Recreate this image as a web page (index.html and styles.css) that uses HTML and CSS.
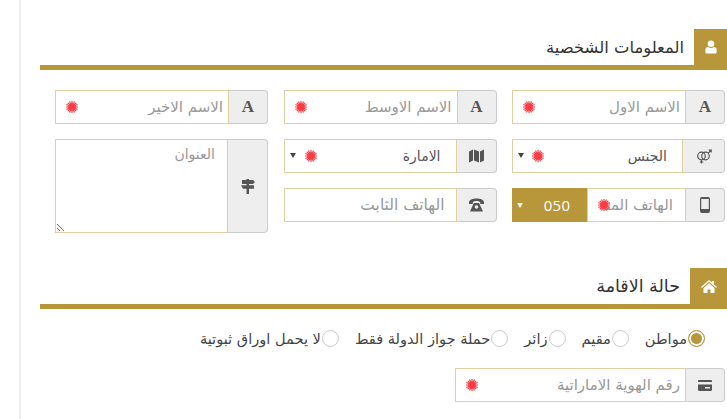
FILE: index.html
```html
<!DOCTYPE html>
<html lang="ar" dir="rtl">
<head>
<meta charset="utf-8">
<title>المعلومات الشخصية</title>
<link rel="stylesheet" href="styles.css">
</head>
<body>
<svg class="defs" width="0" height="0" aria-hidden="true"><defs>
<g id="star"><path d="M6 0v12M0 6h12M1.800 1.800l8.400 8.400M10.200 1.800l-8.400 8.400M3.500.4l5 11.200M8.500.4l-5 11.200M.4 3.500l11.200 5M11.600 3.500L.4 8.500" stroke="#fb3c45" stroke-width="1.200" fill="none"/><circle cx="6" cy="6" r="3.800" fill="#fb3c45"/></g>
</defs></svg>
<main class="page">
  <section class="section">
    <header class="head">
      <span class="head-icon"><svg width="14" height="14" viewBox="0 0 14 14"><circle cx="7" cy="3.800" r="3.300" fill="#fff"/><path d="M1.400 12.300V9.800C1.400 8 2.600 7 4 7c.8.600 1.800 1 3 1s2.200-.4 3-1c1.400 0 2.600 1 2.600 2.800v2.500c0 .8-.6 1.300-1.300 1.300H2.700c-.7 0-1.300-.5-1.300-1.300z" fill="#fff"/></svg></span>
      <h2 class="title">المعلومات الشخصية</h2>
    </header>
    <div class="grid">
      <div class="field"><span class="addon"><b class="letter">A</b></span><span class="box"><input class="input" placeholder="الاسم الاول"><svg class="star" width="12" height="12" viewBox="0 0 12 12"><use href="#star"/></svg></span></div>
      <div class="field"><span class="addon"><b class="letter">A</b></span><span class="box"><input class="input" placeholder="الاسم الاوسط"><svg class="star" width="12" height="12" viewBox="0 0 12 12"><use href="#star"/></svg></span></div>
      <div class="field"><span class="addon"><b class="letter">A</b></span><span class="box"><input class="input" placeholder="الاسم الاخير"><svg class="star" width="12" height="12" viewBox="0 0 12 12"><use href="#star"/></svg></span></div>

      <div class="field"><span class="addon addon-wide"><svg width="16" height="16" viewBox="0 0 16 16" fill="none" stroke="#555" stroke-width="1.200"><circle cx="5.500" cy="8" r="3.800"/><circle cx="9.500" cy="8" r="3.800"/><path d="M5.500 12v3.500M3.800 14h3.400M12.200 5.200L15 2.400M12.800 2.200h2.400v2.400"/></svg></span><span class="box"><span class="select">الجنس</span><svg class="star star-sel" width="12" height="12" viewBox="0 0 12 12"><use href="#star"/></svg><i class="caret"></i></span></div>
      <div class="field"><span class="addon addon-mid"><svg width="15" height="14" viewBox="0 0 15 14" fill="#555"><path d="M0 2.500L4 .5V11.500L0 13.500zM5 .5L10 2.500V13.500L5 11.500zM11 2.500L15 .5V11.500L11 13.500z"/></svg></span><span class="box"><span class="select">الامارة</span><svg class="star star-em" width="12" height="12" viewBox="0 0 12 12"><use href="#star"/></svg><i class="caret"></i></span></div>
      <div class="field tall"><span class="addon addon-tall"><svg width="14" height="15" viewBox="0 0 14 15" fill="#555"><path d="M5.500 0h2.500v15H5.500z"/><path d="M1 1h11l2 2-2 2H1zM0 6.200h13v3.600H2z"/></svg></span><span class="box"><textarea class="area" placeholder="العنوان"></textarea></span></div>

      <div class="field"><span class="addon addon-phone"><svg width="10" height="16" viewBox="0 0 10 16"><rect width="10" height="16" rx="2" fill="#555"/><rect x="1.200" y="2" width="7.600" height="10" fill="#eee"/></svg></span><span class="box box-mob"><input class="input input-mob" placeholder="الهاتف المتحرك"><svg class="star star-mob" width="12" height="12" viewBox="0 0 12 12"><use href="#star"/></svg></span><span class="code">050<i class="caret caret-w"></i></span></div>
      <div class="field"><span class="addon addon-mid"><svg width="15" height="14" viewBox="0 0 15 14" fill="#555"><path d="M0 4.500C0 1.800 3.500.5 7.500.5S15 1.800 15 4.500V6h-3.800V4.200C10.500 3.400 9 3 7.500 3s-3 .4-3.700 1.200V6H0z"/><path d="M4.800 5H10l4 8.500H1z"/><circle cx="7.500" cy="9" r="1.800" fill="#eee"/></svg></span><span class="box"><input class="input input-land" placeholder="الهاتف الثابت"></span></div>
    </div>
  </section>

  <section class="section section-two">
    <header class="head">
      <span class="head-icon head-icon-home"><svg width="16" height="13" viewBox="0 0 16 13" fill="#fff"><path d="M8 0l2.800 2.500V1h2v3.300L16 7.100l-.8.800L8 1.700.8 7.900 0 7.100z"/><path d="M2.500 8L8 3.200 13.500 8v5H9.500V9.500h-3V13h-4z"/></svg></span>
      <h2 class="title title-two">حالة الاقامة</h2>
    </header>
    <div class="radios">
      <label class="radio"><i class="dot dot-on"></i>مواطن</label>
      <label class="radio"><i class="dot"></i>مقيم</label>
      <label class="radio"><i class="dot"></i>زائر</label>
      <label class="radio"><i class="dot"></i>حملة جواز الدولة فقط</label>
      <label class="radio"><i class="dot"></i>لا يحمل اوراق ثبوتية</label>
    </div>
    <div class="field field-id"><span class="addon addon-id"><svg width="14" height="11" viewBox="0 0 14 11" fill="#555"><path d="M1.200 0h11.600c.7 0 1.200.5 1.200 1.200V2H0v-.8C0 .5.500 0 1.200 0zM0 4.500h14v5.300c0 .7-.5 1.200-1.200 1.200H1.200C.5 11 0 10.500 0 9.800zM7 7v1.500h5V7z"/></svg></span><span class="box"><input class="input" placeholder="رقم الهوية الاماراتية"><svg class="star" width="12" height="12" viewBox="0 0 12 12"><use href="#star"/></svg></span></div>
  </section>
</main>
</body>
</html>
```
FILE: styles.css
```css
* { box-sizing: border-box; }
html, body { margin: 0; padding: 0; background: #fff; }
body { width: 727px; height: 419px; overflow: hidden; font-family: "DejaVu Sans", sans-serif; font-size: 14px; color: #555; }
.defs { position: absolute; }
.page { margin-left: 19px; border-left: 2px solid #eee; height: 419px; padding: 29px 0 0 19px; }
.head { display: flex; align-items: stretch; height: 41px; border-bottom: 5px solid #b8973a; }
.head-icon { width: 33px; display: flex; align-items: center; justify-content: center; background: #b8973a; }
.head-icon-home { width: 37px; }
.title { margin: 0 10px 0 0; font-size: 16.400px; font-weight: 400; line-height: 38px; color: #333; }
.title-two { font-size: 17.500px; line-height: 36px; }
.grid { display: grid; grid-template-columns: repeat(3, 213px); grid-template-rows: 34px 34px 34px; gap: 15px 15.500px; padding: 20px 2px 0 15px; }
.field.tall { grid-column: 3; grid-row: 2 / span 2; height: 94px; }
.field { display: flex; height: 34px; }
.addon { flex: 0 0 39px; display: flex; align-items: center; justify-content: center; background: #eee; border: 1px solid #ccc; border-left: 0; border-radius: 0 4px 4px 0; }
.addon-wide { flex-basis: 42px; }
.addon-mid { flex-basis: 40px; }
.addon-tall { flex-basis: 40px; }
.letter { font-family: "Liberation Serif", serif; font-size: 17px; font-weight: 700; color: #555; }
.box { position: relative; flex: 1; min-width: 0; display: flex; align-items: center; background: #fff; border: 1px solid #e0d09f; }
.input { width: 100%; height: 100%; padding: 0 5px 0 12px; border: 0; outline: 0; background: transparent; font: inherit; font-size: 15px; color: #555; }
.input::placeholder, .area::placeholder { color: #999; opacity: 1; }
.input-land { padding-right: 11px; font-size: 15.500px; }
.input-mob { padding-right: 12px; overflow: hidden; }
.area { width: 100%; height: 100%; padding: 6px 12px; border: 0; outline: 0; font: inherit; font-size: 14px; }
.star { position: absolute; left: 10px; top: 10px; }
.select { flex: 1; padding-right: 15px; font-size: 14px; color: #555; }
.star-sel { left: 19px; }
.star-em { left: 20px; }
.star-mob { left: 10px; }
.caret { position: absolute; left: 5px; top: 13px; width: 0; height: 0; border-style: solid; border-width: 5px 3px 0; border-color: #444 transparent transparent; }
.code { position: relative; flex: 0 0 75px; display: flex; align-items: center; justify-content: center; padding-left: 15px; background: #b8973a; color: #fff; font-family: "Open Sans", sans-serif; font-size: 15px; letter-spacing: .3px; }
.caret-w { border-top-color: #fff; top: 15px; }
.section-two { margin-top: 46px; }
.radios { display: flex; gap: 16px; padding: 20px 22px 0 0; height: 48px; }
.radio { display: flex; align-items: center; gap: 1px; height: 18px; font-size: 14.600px; color: #444; white-space: nowrap; }
.dot { flex: none; width: 17px; height: 17px; border: 1px solid #ccc; border-radius: 50%; background: #fff; }
.dot-on { border-color: #b8973a; box-shadow: inset 0 0 0 2px #fff; background: #b8973a; }
.field-id { width: 270px; margin: 11px 2px 0 auto; }
```
